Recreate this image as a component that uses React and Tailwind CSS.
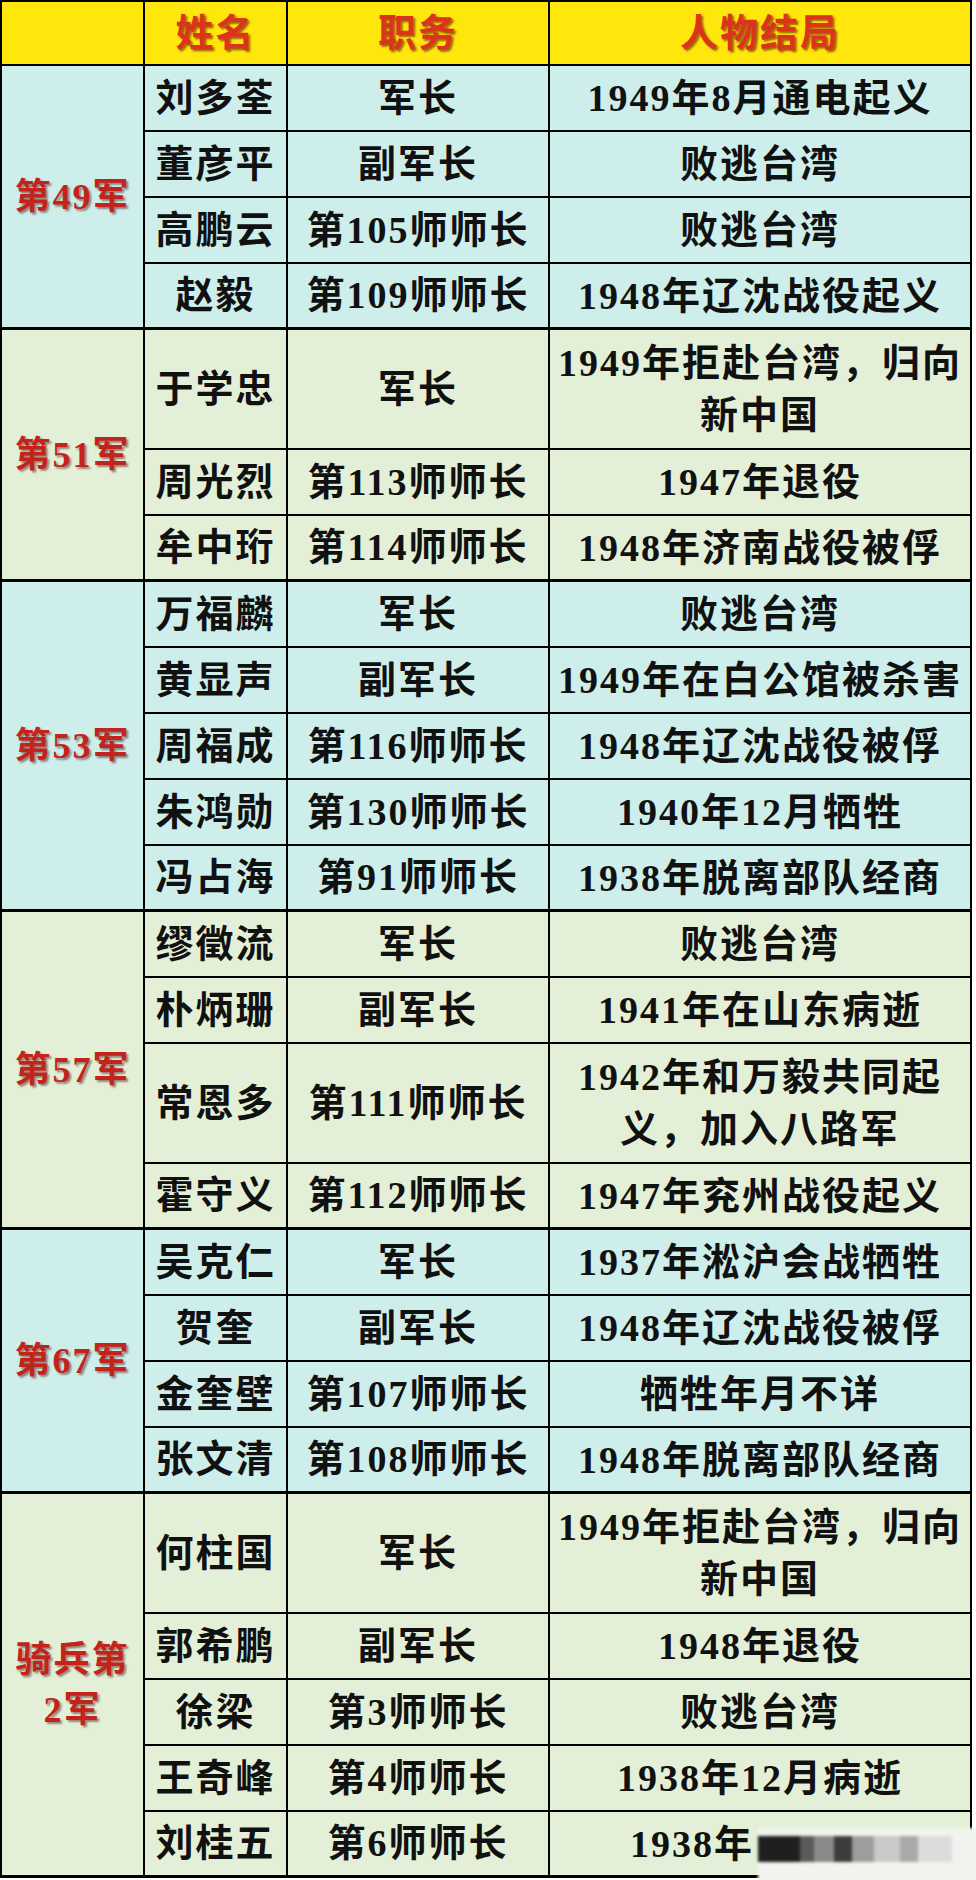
import React from 'react'

const CYAN = 'bg-[#cdeeea]'
const GREEN = 'bg-[#e3f0d7]'

const groups = [
  {
    label: ['第49军'],
    bg: CYAN,
    rows: [
      ['刘多荃', '军长', ['1949年8月通电起义']],
      ['董彦平', '副军长', ['败逃台湾']],
      ['高鹏云', '第105师师长', ['败逃台湾']],
      ['赵毅', '第109师师长', ['1948年辽沈战役起义']],
    ],
  },
  {
    label: ['第51军'],
    bg: GREEN,
    rows: [
      ['于学忠', '军长', ['1949年拒赴台湾，归向', '新中国']],
      ['周光烈', '第113师师长', ['1947年退役']],
      ['牟中珩', '第114师师长', ['1948年济南战役被俘']],
    ],
  },
  {
    label: ['第53军'],
    bg: CYAN,
    rows: [
      ['万福麟', '军长', ['败逃台湾']],
      ['黄显声', '副军长', ['1949年在白公馆被杀害']],
      ['周福成', '第116师师长', ['1948年辽沈战役被俘']],
      ['朱鸿勋', '第130师师长', ['1940年12月牺牲']],
      ['冯占海', '第91师师长', ['1938年脱离部队经商']],
    ],
  },
  {
    label: ['第57军'],
    bg: GREEN,
    rows: [
      ['缪徵流', '军长', ['败逃台湾']],
      ['朴炳珊', '副军长', ['1941年在山东病逝']],
      ['常恩多', '第111师师长', ['1942年和万毅共同起', '义，加入八路军']],
      ['霍守义', '第112师师长', ['1947年兖州战役起义']],
    ],
  },
  {
    label: ['第67军'],
    bg: CYAN,
    rows: [
      ['吴克仁', '军长', ['1937年淞沪会战牺牲']],
      ['贺奎', '副军长', ['1948年辽沈战役被俘']],
      ['金奎壁', '第107师师长', ['牺牲年月不详']],
      ['张文清', '第108师师长', ['1948年脱离部队经商']],
    ],
  },
  {
    label: ['骑兵第', '2军'],
    bg: GREEN,
    rows: [
      ['何柱国', '军长', ['1949年拒赴台湾，归向', '新中国']],
      ['郭希鹏', '副军长', ['1948年退役']],
      ['徐梁', '第3师师长', ['败逃台湾']],
      ['王奇峰', '第4师师长', ['1938年12月病逝']],
      ['刘桂五', '第6师师长', null],
    ],
  },
]

const headRed = 'text-[#db341c] [text-shadow:2px_2px_2px_rgba(80,0,0,0.55)]'
const groupRed = 'text-[#c2241c] [text-shadow:2px_2px_2px_rgba(60,0,0,0.45)]'

const Row = ({ row, last }) => {
  const [name, role, outcome] = row
  const tall = outcome && outcome.length > 1
  const height = tall ? 'h-[120px]' : last ? 'h-[63px]' : 'h-[66px]'
  return (
    <div className={`flex ${height} ${last ? '' : 'border-b-2 border-black'}`}>
      <div className="w-[143px] border-r-2 border-black flex items-center justify-center">{name}</div>
      <div className="w-[262px] border-r-2 border-black flex items-center justify-center">{role}</div>
      <div className="flex-1 flex flex-col items-center justify-center leading-[52px]">
        {outcome ? (
          outcome.map((line) => <span key={line}>{line}</span>)
        ) : (
          <span className="self-start pl-[80px]">1938年</span>
        )}
      </div>
    </div>
  )
}

const Group = ({ group }) => (
  <div className={`flex border-b-[3px] border-black ${group.bg}`}>
    <div className={`w-[143px] border-r-2 border-black flex flex-col items-center justify-center text-[36px] leading-[50px] tracking-[2px] ${groupRed}`}>
      {group.label.map((l) => (
        <span key={l}>{l}</span>
      ))}
    </div>
    <div className="flex-1 flex flex-col">
      {group.rows.map((row, i) => (
        <Row key={row[0]} row={row} last={i === group.rows.length - 1} />
      ))}
    </div>
  </div>
)

const Watermark = () => (
  <div className="absolute left-[756px] top-[1826px] w-[220px] h-[54px] bg-[#f1f4ee] blur-[1.5px]">
    <div className="flex h-[26px] mt-[8px]">
      <div className="w-[42px] bg-[#1f1f1f]" />
      <div className="w-[14px] bg-[#5a5a5a]" />
      <div className="w-[20px] bg-[#8a8a8a]" />
      <div className="w-[18px] bg-[#3c3c3c]" />
      <div className="w-[22px] bg-[#9d9d9d]" />
      <div className="w-[26px] bg-[#c9c9c9]" />
      <div className="w-[18px] bg-[#a9a9a9]" />
      <div className="w-[34px] bg-[#dcdcdc]" />
    </div>
  </div>
)

export default function App() {
  return (
    <div className="w-[976px] h-[1880px] bg-white font-['Liberation_Serif','Noto_Sans_CJK_SC',serif] font-bold text-[38px] tracking-[2px] text-[#111]">
      <div className="relative w-[972px] border-l-2 border-r-2 border-t-2 border-black">
        <div className={`flex h-[64px] border-b-2 border-black bg-[#ffe70d] ${headRed}`}>
          <div className="w-[143px] border-r-2 border-black" />
          <div className="w-[143px] border-r-2 border-black flex items-center justify-center">姓名</div>
          <div className="w-[262px] border-r-2 border-black flex items-center justify-center">职务</div>
          <div className="flex-1 flex items-center justify-center">人物结局</div>
        </div>
        {groups.map((g) => (
          <Group key={g.label.join('')} group={g} />
        ))}
        <Watermark />
      </div>
    </div>
  )
}
